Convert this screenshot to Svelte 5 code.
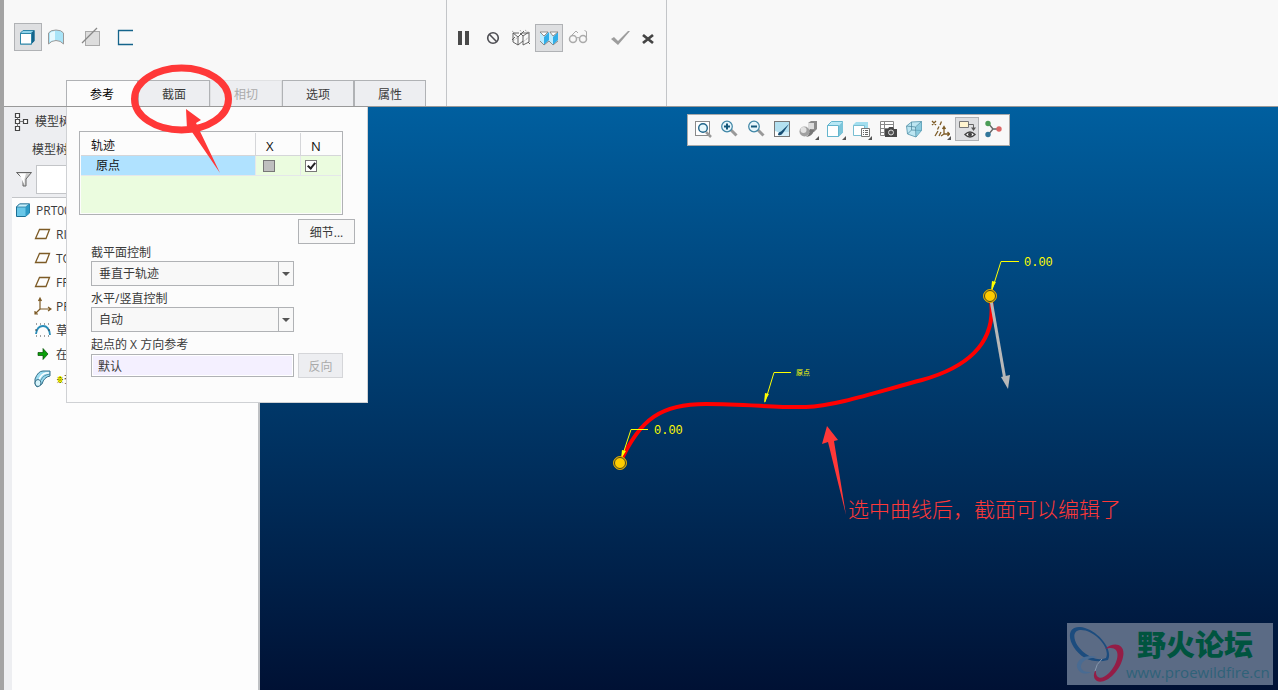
<script>
  let activeTab = $state("参考");
  let sectionControl = $state("垂直于轨迹");
  let verticalControl = $state("自动");
  let startReference = $state("默认");
  let normal = $state(true);
  let filter = $state("");

  const tabs = [
    { label: "参考" },
    { label: "截面" },
    { label: "相切", disabled: true },
    { label: "选项" },
    { label: "属性" },
  ];

  const treeItems = [
    { icon: "plane", label: "RIGHT" },
    { icon: "plane", label: "TOP" },
    { icon: "plane", label: "FRONT" },
    { icon: "csys", label: "PRT" },
    { icon: "sketch", label: "草绘" },
    { icon: "insert", label: "在此" },
    { icon: "sweep", label: "扫描", isNew: true },
  ];

  const viewTools = [
    { icon: "refit", label: "重新调整" },
    { icon: "zoomIn", label: "放大" },
    { icon: "zoomOut", label: "缩小" },
    { icon: "repaint", label: "重画" },
    { icon: "shading", label: "渲染选项", menu: true },
    { icon: "display", label: "显示样式", menu: true },
    { icon: "saved", label: "已保存方向", menu: true },
    { icon: "manager", label: "视图管理器" },
    { icon: "perspective", label: "透视图" },
    { icon: "datum", label: "基准显示过滤器", menu: true },
    { icon: "annotation", label: "注释显示", active: true },
    { icon: "spin", label: "旋转中心" },
  ];
</script>

{#snippet icon(name)}
  <svg class="icon" width="20" height="20" viewBox="0 0 20 20" fill="none" aria-hidden="true">
    {#if name === "solid"}
      <path d="M2.500 6l2.500-2.500h11v10L13 17H2.500z" fill="#8fd3ea" stroke="#2d86a8" />
      <path d="M13 6l3.500-3v11L13 17.500z" fill="#14648b" />
      <rect x="2.500" y="6.500" width="11" height="10.500" fill="#fff" stroke="#2d86a8" />
    {:else if name === "surface"}
      <path d="M2.500 17V6q2-3 7.500-3t7.500 3v11q-3-3.500-7.500-3.500T2.500 17z" fill="#a9e4f8" stroke="#999" />
      <path d="M4 6q2-1.500 5-2v9q-3 0-5 1.500z" fill="#e6f9ff" />
    {:else if name === "remove"}
      <rect x="4.500" y="4.500" width="14" height="14" fill="#ddd" stroke="#aaa" />
      <path d="M1 16L16 1" stroke="#888" stroke-width="1.200" />
    {:else if name === "thin"}
      <path d="M17 3.500H2.500v14H17" stroke="#14648b" stroke-width="1.300" />
    {:else if name === "pause"}
      <path d="M4 3h4v14H4zM11 3h4v14h-4z" fill="#4a4a4a" />
    {:else if name === "none"}
      <circle cx="10" cy="10" r="5.300" stroke="#4d4d52" stroke-width="1.600" />
      <path d="M6.300 6.300l7.400 7.400" stroke="#4d4d52" stroke-width="1.600" />
    {:else if name === "wireframe"}
      <path d="M2 5h6M11 5h7M2 5v9l5 3 5-4M7 9v8M2 5l5 4 6-6M12 8l6-4v10M12 8v9l6-3M12 8l-3-3M1 12l3-3M17 14l2 2" stroke="#555" stroke-width=".9" />
      <path d="M1 3l4 3M9 2l2 3M14 2l4 3M2 13l5-4M12 14l6-5" stroke="#999" stroke-dasharray="1 1" />
    {:else if name === "verify"}
      <path d="M1 4l4 5v8l-4-4z" fill="#bcecff" />
      <path d="M5 9l5-5v8l-5 5z" fill="#31aee8" />
      <path d="M10 4l4 5v8l-4-4z" fill="#bcecff" />
      <path d="M14 9l5-5v8l-5 5z" fill="#31aee8" />
      <path d="M1 4h8L5 8zM11 4h8l-5 4z" fill="#fff" stroke="#777" stroke-width=".8" />
      <path d="M1 13l4 4 5-4M10 13l4 4 5-4" stroke="#777" stroke-width=".8" />
    {:else if name === "glasses"}
      <circle cx="5" cy="11" r="3.500" stroke="#aaa" stroke-width="1.500" />
      <circle cx="15" cy="11" r="3.500" stroke="#aaa" stroke-width="1.500" />
      <path d="M8.500 10q1.500-1 3 0M2 9l6-6 2 2M18.500 11V3.500l-2-1" stroke="#aaa" />
    {:else if name === "check"}
      <path d="M1 11l3-2 4 4L18 3h2L8 17z" fill="#9d9d9d" />
    {:else if name === "cancel"}
      <path d="M5 7l10 8M15 7L5 15" stroke="#444" stroke-width="2.800" />
    {:else if name === "model"}
      <path d="M3.500 2.500h4v4h-4zM3.500 8.500h4v4h-4zM3.500 15.500h4v4h-4zM11.500 8.500h4v4h-4z" fill="#fff" stroke="#444" stroke-width="1.200" />
      <path d="M5.500 6.500v2M5.500 12.500v3M7.500 10.500h4" stroke="#777" />
    {:else if name === "filter"}
      <path d="M4.500 2.500h15L14 9v7h-3V9z" fill="#ccc" stroke="#666" />
      <path d="M7 3.500h7L12.500 9v6" fill="#fff" />
    {:else if name === "part"}
      <path d="M4.500 7l3-3h10v9l-4 3.500h-9z" fill="#69c7e8" stroke="#1c6f94" />
      <path d="M4.500 7l3-3h10l-4 3z" fill="#c6effb" stroke="#1c6f94" stroke-width=".7" />
      <path d="M13.500 7l4-3v9l-4 3.500z" fill="#2d9ac5" />
    {:else if name === "plane"}
      <path d="M7.500 5.500h10L14 14.500H3.500z" stroke="#7d5b26" stroke-width="1.300" />
    {:else if name === "csys"}
      <path d="M8 13V3M8 13h10M8 13l-5 5M6.500 5L8 2l1.500 3M16 11l3 2-3 2M3 15v3h3" stroke="#7d5b26" stroke-width="1.200" />
    {:else if name === "sketch"}
      <path d="M4 14Q5 6 11 6t7 9" stroke="#278cb8" stroke-width="1.800" />
      <path d="M4 4h14M4 16h14" stroke="#444" stroke-dasharray="1 3" />
      <path d="M3 10h2M16 10h2" stroke="#444" />
    {:else if name === "insert"}
      <path d="M6 8.500h5V4.500l5 5.500-5 5.500v-4H6z" fill="#0aa00a" stroke="#064c06" stroke-width=".7" />
    {:else if name === "sweep"}
      <path d="M3 11Q6 3 11 3h7v5q-6 1-8 8l-5 3-2-3z" fill="#9bdcf1" stroke="#36718a" />
      <path d="M7 12q2-6 7-7h3" stroke="#fff" stroke-width="1.500" />
      <path d="M9 12q2-5 9-6" stroke="#36718a" stroke-width=".7" />
      <ellipse cx="6" cy="15" rx="3" ry="3.500" fill="#d7f4fb" stroke="#36718a" />
    {:else if name === "refit"}
      <rect x="2.500" y="2.500" width="14" height="14" fill="#fff" stroke="#8a8a8a" />
      <path d="M13 13l5 5" stroke="#999" stroke-width="2.500" />
      <circle cx="10" cy="9" r="4.300" fill="#e8f8fc" stroke="#20658a" stroke-width="1.400" />
    {:else if name === "zoomIn" || name === "zoomOut"}
      <path d="M12 11l5.500 5.500" stroke="#999" stroke-width="3" />
      <circle cx="8" cy="7.500" r="5.300" fill="#e6f5fb" stroke="#3e85a5" stroke-width="1.200" />
      <path d="M5 7.500h6" stroke="#14577a" stroke-width="2" />
      {#if name === "zoomIn"}
        <path d="M8 4.500v6" stroke="#14577a" stroke-width="2" />
      {/if}
    {:else if name === "repaint"}
      <rect x="2.500" y="2.500" width="15" height="15" fill="#d4eff9" stroke="#777" />
      <path d="M3 3h14v10H3z" fill="#b3e0f0" />
      <path d="M3 12q5 1 4 5H3z" fill="#fff" />
      <path d="M6 16q0-3 3-3.500L17 5l-6 9q-2 3-5 2z" fill="#174f75" />
    {:else if name === "shading"}
      <path d="M10 4l3-2h6v8l-3 3h-6z" fill="#8a8a8a" />
      <path d="M10 4h6v6l-6 1z" fill="#dcdcdc" />
      <circle cx="6.500" cy="12.500" r="5" fill="#a0a0a0" />
      <circle cx="5.500" cy="11" r="3" fill="#e2e2e2" />
      <path d="M8 18q7-1 8-7l-4-1q0 5-4 8z" fill="#777" />
    {:else if name === "display"}
      <path d="M2.500 6.500l4-4h11v11l-4 4h-11z" fill="#b8e8f5" stroke="#65b5cd" />
      <path d="M2.500 6.500h11v11h-11z" fill="#fff" stroke="#65b5cd" />
      <path d="M14 6.500l4-4v11l-4 4z" fill="#7cc5da" />
    {:else if name === "saved"}
      <path d="M2 6l3-3h12v13H2z" fill="#a2deef" />
      <path d="M2.500 6.500h11v10h-11z" fill="#fff" stroke="#78bed2" />
      <path d="M10.500 9.500h8v8h-8z" fill="#fff" stroke="#777" />
      <path d="M12 11.500h1M14 11.500h3M12 13.500h1M14 13.500h3M12 15.500h1M14 15.500h3" stroke="#666" />
    {:else if name === "manager"}
      <path d="M2.500 2.500h13v14h-13zM2.500 5.500h13M2.500 9.500h13M2.500 13.500h13M6.500 2.500v14" fill="#fff" stroke="#888" />
      <path d="M7 10h3l1-2h4l1 2h3v8H7z" fill="#484848" />
      <circle cx="13" cy="13.500" r="2.500" fill="#555" stroke="#ddd" />
    {:else if name === "perspective"}
      <path d="M2.500 7l5-4 10-.5v9L12 18l-8.500-3z" fill="#bde6f2" stroke="#6aa5ba" />
      <path d="M2.500 7l9 1 6-5.500M11.500 8l.5 10M7.500 3v8l-4 4M7.500 11l10 .5" stroke="#508aa0" stroke-width=".8" />
      <path d="M12 8l5.500-5v8.500L12 17z" fill="#69b7d0" opacity=".6" />
    {:else if name === "datum"}
      <path d="M2 2l4 4M6 2L2 6M10 6l1.500-3.500M7.500 10.500L9 7.500M5 17l3-5M9 17l2-4M14 8v7h5M14 15l-3 2M12.500 10L14 7.500l1.500 2.500M17.500 13l2 2-2 2" stroke="#7d5b26" stroke-width="1.300" />
    {:else if name === "annotation"}
      <path d="M2.500 2.500h9v6h-9z" fill="#fff4cf" stroke="#777" />
      <path d="M11 5.500h5.500V9" stroke="#666" />
      <path d="M14 8.500h5l-2.500 3.500z" fill="#555" />
      <path d="M8 15.500q5-5 10 0-5 5-10 0z" fill="#fff" stroke="#444" stroke-width="1.400" />
      <circle cx="13" cy="15.500" r="2" fill="#444" />
    {:else if name === "spin"}
      <path d="M5 4l5 6-5 6M10 10h7" stroke="#666" stroke-width="1.400" />
      <circle cx="5" cy="4.500" r="2.700" fill="#4b9d57" />
      <circle cx="5" cy="15.500" r="2.700" fill="#32779b" />
      <circle cx="16" cy="10" r="2.700" fill="#dc6767" />
    {/if}
  </svg>
{/snippet}

{#snippet toolButton(name, label, active = false)}
  <button type="button" class="tool" class:active aria-label={label}>
    {@render icon(name)}
  </button>
{/snippet}

<div class="app">
  <header class="ribbon">
    <section class="feature">
      <div class="tools">
        {@render toolButton("solid", "扫描为实体", true)}
        {@render toolButton("surface", "扫描为曲面")}
        <span class="gap"></span>
        {@render toolButton("remove", "移除材料")}
        <span class="gap"></span>
        {@render toolButton("thin", "创建薄板特征")}
      </div>
      <nav class="tabs" aria-label="扫描">
        {#each tabs as tab}
          <button
            type="button"
            class:current={activeTab === tab.label}
            disabled={tab.disabled}
            onclick={() => (activeTab = tab.label)}
          >
            {tab.label}
          </button>
        {/each}
      </nav>
    </section>

    <section class="confirm">
      <div class="tools">
        {@render toolButton("pause", "暂停")}
        {@render toolButton("none", "无预览")}
        {@render toolButton("wireframe", "分离")}
        {@render toolButton("verify", "连接", true)}
        {@render toolButton("glasses", "特征预览")}
        <span class="gap"></span>
        <span class="gap"></span>
        {@render toolButton("check", "确定")}
        {@render toolButton("cancel", "取消")}
      </div>
    </section>
  </header>

  <main class="workspace">
    <aside class="sidebar">
      <div class="sidebar-tab">
        {@render icon("model")}
        <span>模型树</span>
      </div>
      <h2>模型树</h2>
      <div class="filter">
        {@render icon("filter")}
        <input type="text" aria-label="过滤" bind:value={filter} />
      </div>
      <ul class="tree">
        <li class="root">{@render icon("part")}<span>PRT0001</span></li>
        {#each treeItems as item}
          <li>
            {@render icon(item.icon)}
            <span>
              {#if item.isNew}<b class="new">※</b>{/if}{item.label}
            </span>
          </li>
        {/each}
      </ul>
    </aside>

    <section class="viewport">
      <div class="view-tools">
        {#each viewTools as tool}
          <button
            type="button"
            class="view-tool"
            class:active={tool.active}
            class:menu={tool.menu}
            aria-label={tool.label}
          >
            {@render icon(tool.icon)}
          </button>
        {/each}
      </div>

      <svg class="model" width="1018" height="583" viewBox="260 107 1018 583" fill="none">
        <path
          d="M620 463C640 418 662 404 706 404C746 404 780 408 806 407C836 406 880 391 922 380C972 366 996 340 991 300"
          stroke="#f00"
          stroke-width="4"
        />
        <path d="M991 300L1005 380" stroke="#b8b8b8" stroke-width="3" />
        <path d="M1001 377l9-2-2 14z" fill="#b8b8b8" />

        <g stroke="#ff0">
          <path d="M622 457L631 429.500H648" />
          <path d="M765 402L774 372.500H791" />
          <path d="M992 290L1001 261.500H1019" />
        </g>
        <g fill="#ff0">
          <path d="M621 459l1-9 4 1z" />
          <path d="M764 403l1-10 4 1z" />
          <path d="M991 291l1-10 4 1z" />
        </g>
        <g fill="#fc0" stroke="#d9a800">
          <circle cx="620" cy="463" r="6.500" />
          <circle cx="990" cy="296" r="6.500" />
        </g>
        <g stroke="#4a4420">
          <circle cx="620" cy="463" r="5.500" />
          <circle cx="990" cy="296" r="5.500" />
        </g>
        <g class="dimension">
          <text x="654" y="434">0.00</text>
          <text x="1024" y="266">0.00</text>
          <text class="origin" x="796" y="375">原点</text>
        </g>
      </svg>

      <div class="watermark">
        <svg width="59" height="60" viewBox="0 0 59 60" fill="none" aria-hidden="true">
          <path
            fill-rule="evenodd"
            d="M41 36C47 24 28 4 13 3C-3 2 1 24 18 34C26 38 33 38 41 36zM39 34C31 37 25 34 19 30C7 22 3 7 13 6C26 5 44 23 39 34z"
            fill="#1c4c7e"
          />
          <path d="M38 25C47 17 59 20 56 33C53 48 38 61 30 57C25 54 27 48 29 46C28 54 34 57 42 49C52 39 56 19 38 25z" fill="#941d46" />
          <path d="M30 33C20 30 9 35 10 43C12 50 19 51 24 48C14 49 11 42 17 37C21 34 26 34 30 33z" fill="#496b92" />
          <path d="M28 47q1-7 7-12" stroke="#8798ae" />
        </svg>
        <div>
          <strong>野火论坛</strong>
          <span>www.proewildfire.cn</span>
        </div>
      </div>
    </section>
  </main>

  <form class="references" onsubmit={(e) => e.preventDefault()}>
    <div class="trajectories">
      <table>
        <thead>
          <tr>
            <th class="name">轨迹</th>
            <th class="axis">X</th>
            <th>N</th>
          </tr>
        </thead>
        <tbody>
          <tr>
            <td class="name selected">原点</td>
            <td><input type="checkbox" aria-label="原点 X" disabled /></td>
            <td><input type="checkbox" aria-label="原点 N" bind:checked={normal} /></td>
          </tr>
        </tbody>
      </table>
    </div>
    <button type="button" class="details">细节...</button>

    <div class="field">
      <label for="section-control">截平面控制</label>
      <div class="select">
        <select id="section-control" bind:value={sectionControl}>
          <option>垂直于轨迹</option>
        </select>
      </div>
    </div>
    <div class="field">
      <label for="vertical-control">水平/竖直控制</label>
      <div class="select">
        <select id="vertical-control" bind:value={verticalControl}>
          <option>自动</option>
        </select>
      </div>
    </div>
    <div class="field">
      <label for="start-reference">起点的 X 方向参考</label>
      <div class="reference-row">
        <input id="start-reference" type="text" bind:value={startReference} />
        <button type="button" disabled>反向</button>
      </div>
    </div>
  </form>

  <svg class="markup" width="1140" height="530" viewBox="0 0 1140 530" fill="#ff3838">
    <ellipse cx="181.500" cy="99" rx="47" ry="31" fill="none" stroke="#ff3838" stroke-width="7" />
    <path d="M186 109l15 11-5 3 24 50-28-41-5-3z" />
    <path d="M827 426l11 14-4 1 12 74-18-73-6 2z" />
    <text x="848" y="517">选中曲线后，截面可以编辑了</text>
  </svg>
</div>

<style>
  :global(body) {
    margin: 0;
    background: #f8f8f8;
    color: #3a3a3a;
    font-family: "Open Sans", "Noto Sans CJK SC", sans-serif;
    font-size: 12px;
  }

  .app {
    position: relative;
    min-height: 100vh;
    box-sizing: border-box;
    display: flex;
    flex-direction: column;
    overflow: hidden;
    border-left: 4px solid #a3a3a3;
  }

  button,
  input,
  select {
    box-sizing: border-box;
    margin: 0;
    padding: 0;
    color: inherit;
    font: inherit;
  }

  .icon {
    display: block;
    flex: none;
  }

  .ribbon {
    display: flex;
    border-bottom: 1px solid #999;
    background: #f8f8f8;
  }

  .feature,
  .confirm {
    box-sizing: border-box;
    padding-top: 23px;
    border-right: 1px solid #c3c5c8;
  }

  .feature {
    width: 443px;
  }

  .confirm {
    width: 220px;
    padding-top: 24px;
    padding-left: 3px;
  }

  .tools {
    display: flex;
  }

  .feature .tools {
    padding-left: 10px;
  }

  .gap {
    width: 7px;
  }

  .tool {
    width: 28px;
    height: 28px;
    display: flex;
    align-items: center;
    justify-content: center;
    border: 1px solid transparent;
    background: transparent;
  }

  .confirm .tool:nth-child(2),
  .confirm .tool:nth-child(5) {
    margin-left: 1px;
  }

  .tool.active {
    border-color: #b0b2b5;
    background: #dedfe1;
  }

  .tabs {
    display: flex;
    margin: 29px 0 0 62px;
  }

  .tabs button {
    width: 72px;
    height: 26px;
    border: 1px solid #b0b2b5;
    border-bottom: 0;
    background: #edeef1;
  }

  .tabs button.current {
    background: #fcfcfc;
    color: #000;
  }

  .tabs button:disabled {
    border-color: #e0e1e3;
    color: #aaa;
  }

  .workspace {
    flex: 1;
    display: flex;
  }

  .sidebar {
    width: 256px;
    box-sizing: border-box;
    flex: none;
    display: flex;
    flex-direction: column;
    padding-left: 8px;
    border-right: 2px solid #bfc1c4;
    background: #edeef1;
  }

  .sidebar-tab {
    height: 28px;
    display: flex;
    align-items: center;
    gap: 3px;
  }

  h2 {
    margin: 0;
    padding-left: 20px;
    font-size: 12px;
    font-weight: 400;
    line-height: 30px;
  }

  .filter {
    display: flex;
    align-items: center;
    gap: 4px;
    margin-bottom: 3px;
  }

  .filter input {
    width: 180px;
    height: 29px;
    border: 1px solid #c3c5c8;
    background: #fff;
  }

  .tree {
    flex: 1;
    margin: 0;
    padding: 0;
    border-top: 1px solid #c3c5c8;
    background: #fdfdfd;
    list-style: none;
  }

  .tree li {
    height: 24px;
    display: flex;
    align-items: center;
    gap: 4px;
    padding-left: 20px;
    white-space: nowrap;
  }

  .tree .root {
    padding-left: 0;
  }

  .new {
    background: radial-gradient(#ff0 40%, transparent 50%);
    color: #222;
    font-size: 8px;
  }

  .viewport {
    position: relative;
    min-width: 0;
    flex: 1;
    overflow: hidden;
    background: linear-gradient(#005f9f, #001134);
  }

  .view-tools {
    position: absolute;
    z-index: 1;
    top: 7px;
    left: 427px;
    width: 323px;
    height: 32px;
    box-sizing: border-box;
    display: flex;
    align-items: center;
    justify-content: space-between;
    padding: 0 4px 2px 3px;
    border: 1px solid #aaa;
    background: #f8f8f8;
  }

  .view-tool {
    position: relative;
    width: 24px;
    height: 24px;
    display: flex;
    align-items: center;
    justify-content: center;
    border: 1px solid transparent;
    background: transparent;
  }

  .view-tool.active {
    border-color: #b0b2b5;
    background: #dedfe1;
  }

  .view-tool.menu::after {
    content: "";
    position: absolute;
    right: 0;
    bottom: 0;
    border: 2px solid #555;
    border-top-color: transparent;
    border-left-color: transparent;
  }

  .model {
    position: absolute;
    top: 0;
    left: 0;
  }

  .dimension {
    fill: #ff0;
    font-family: "Liberation Mono", "Noto Sans CJK SC", monospace;
    font-size: 12px;
  }

  .dimension .origin {
    font-size: 7px;
  }

  .watermark {
    position: absolute;
    right: 5px;
    bottom: 5px;
    width: 206px;
    height: 62px;
    display: flex;
    align-items: center;
    background: #5b6b85;
    color: #00543f;
  }

  .watermark div {
    display: flex;
    flex-direction: column;
  }

  .watermark strong {
    padding-left: 11px;
    font-family: "Noto Sans CJK SC", sans-serif;
    font-size: 29px;
    font-weight: 900;
    line-height: 36px;
  }

  .watermark span {
    color: #2f6279;
    font-size: 15px;
    line-height: 22px;
  }

  .references {
    position: absolute;
    z-index: 2;
    top: 107px;
    left: 62px;
    width: 302px;
    box-sizing: border-box;
    display: flex;
    flex-direction: column;
    padding: 24px 12px;
    border: 1px solid #cfd1d4;
    border-top: 0;
    background: #fcfcfc;
  }

  .trajectories {
    width: 264px;
    height: 84px;
    box-sizing: border-box;
    padding: 1px;
    border: 1px solid #b0b2b5;
    background: #ebfcdf content-box;
  }

  table {
    width: 100%;
    table-layout: fixed;
    border-collapse: separate;
    border-spacing: 0;
  }

  th,
  td {
    height: 20px;
    box-sizing: border-box;
    padding: 0 10px;
    border-right: 1px solid #d5d6d9;
    border-bottom: 1px solid #d5d6d9;
    line-height: 18px;
    text-align: left;
  }

  th {
    height: 23px;
    background: #fcfcfc;
    color: #111;
    font-weight: 400;
    vertical-align: bottom;
  }

  th:not(.name) {
    font-size: 13px;
  }

  th:last-child,
  td:last-child {
    border-right: 0;
  }

  .name {
    width: 175px;
  }

  .axis {
    width: 45px;
  }

  td {
    padding: 0 4px;
    border-color: #e5e7ea;
  }

  td.name {
    padding-left: 15px;
  }

  .selected {
    background: #b0e2ff;
    color: #111;
  }

  input[type="checkbox"] {
    position: relative;
    width: 12px;
    height: 12px;
    display: block;
    appearance: none;
    border: 1px solid #777;
    background: #fff;
  }

  input[type="checkbox"]:disabled {
    margin-left: 3px;
    background: #bfbfbf;
  }

  input[type="checkbox"]:checked::after {
    content: "";
    position: absolute;
    top: 0;
    left: 3px;
    width: 3px;
    height: 6px;
    border: solid #222;
    border-width: 0 2px 2px 0;
    transform: rotate(40deg);
  }

  .details,
  .reference-row button {
    height: 25px;
    border: 1px solid #b0b2b5;
    background: #f8f8f8;
  }

  .details {
    width: 57px;
    align-self: flex-end;
    margin-top: 4px;
  }

  .field {
    margin: 0 0 4px 12px;
  }

  .field:last-child {
    margin-bottom: 0;
  }

  label {
    display: block;
    line-height: 17px;
  }

  .select {
    position: relative;
    width: 203px;
  }

  select {
    width: 100%;
    height: 25px;
    display: block;
    appearance: none;
    padding-left: 7px;
    border: 1px solid #b0b2b5;
    border-radius: 0;
    background: #f8f8f8;
  }

  .select::before {
    content: "";
    position: absolute;
    top: 0;
    right: 15px;
    width: 1px;
    height: 25px;
    background: #b0b2b5;
  }

  .select::after {
    content: "";
    position: absolute;
    top: 11px;
    right: 4px;
    border: 4px solid transparent;
    border-top-color: #555;
    border-bottom: 0;
  }

  .reference-row {
    display: flex;
    align-items: center;
    gap: 4px;
  }

  .reference-row input {
    width: 203px;
    height: 23px;
    padding: 0 6px;
    border: 1px solid #b0b2b5;
    background: #f4f0ff;
    box-shadow: inset 0 0 0 1px #fff;
  }

  .reference-row button {
    width: 45px;
    border-color: #d5d6d9;
    background: #edeef1;
    color: #aaa;
  }

  .markup {
    position: absolute;
    z-index: 3;
    top: 0;
    left: -4px;
    pointer-events: none;
  }

  .markup text {
    font-family: "Noto Sans CJK SC", sans-serif;
    font-size: 21px;
    font-weight: 300;
  }
</style>
